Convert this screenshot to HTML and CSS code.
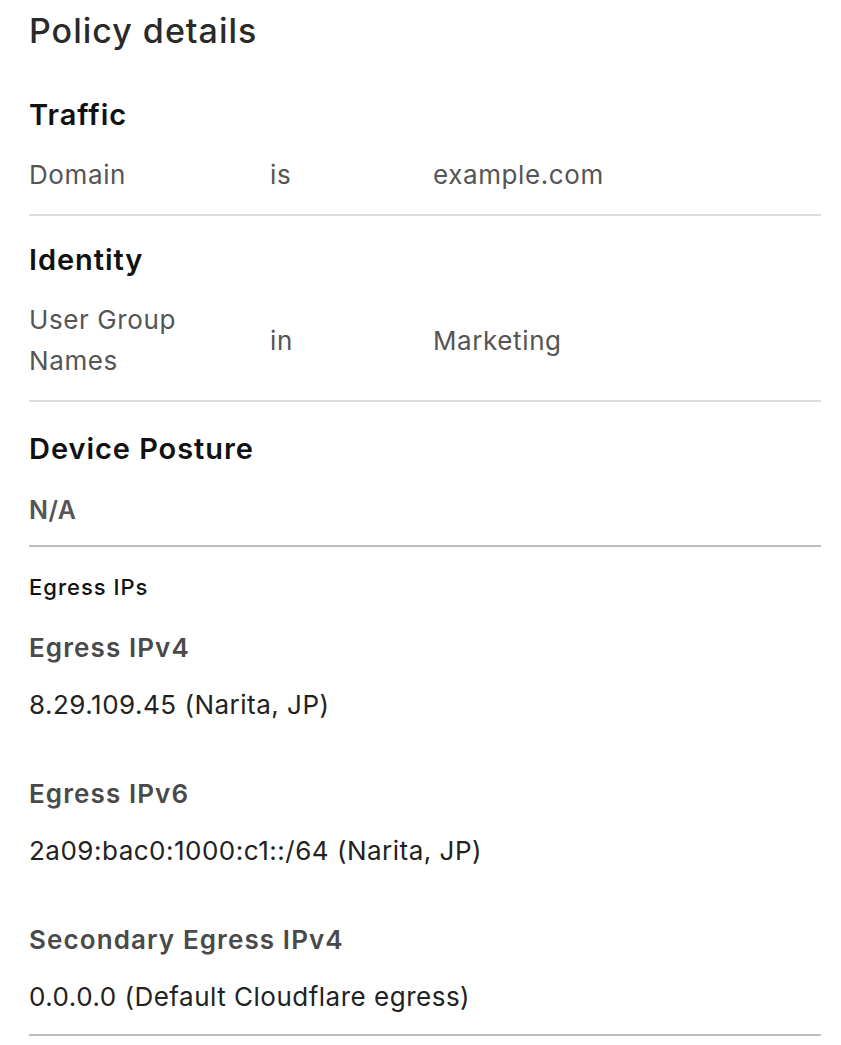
FILE: index.html
```html
<!DOCTYPE html>
<html>
<head>
<meta charset="utf-8">
<link rel="stylesheet" href="styles.css">
</head>
<body>
<main class="page">
  <h1 class="title">Policy details</h1>

  <section class="section">
    <h2 class="heading">Traffic</h2>
    <div class="cond">
      <span class="cell">Domain</span>
      <span class="cell">is</span>
      <span class="cell">example.com</span>
    </div>
  </section>

  <section class="section">
    <h2 class="heading">Identity</h2>
    <div class="cond">
      <span class="cell">User Group<br>Names</span>
      <span class="cell">in</span>
      <span class="cell">Marketing</span>
    </div>
  </section>

  <section class="section section-dark">
    <h2 class="heading">Device Posture</h2>
    <div class="na">N/A</div>
  </section>

  <section class="egress">
    <h3 class="egress-title">Egress IPs</h3>
    <div class="field">
      <div class="field-label">Egress IPv4</div>
      <div class="field-value">8.29.109.45 (Narita, JP)</div>
    </div>
    <div class="field">
      <div class="field-label">Egress IPv6</div>
      <div class="field-value">2a09:bac0:1000:c1::/64 (Narita, JP)</div>
    </div>
    <div class="field">
      <div class="field-label">Secondary Egress IPv4</div>
      <div class="field-value">0.0.0.0 (Default Cloudflare egress)</div>
    </div>
  </section>
</main>
</body>
</html>
```

FILE: styles.css
```css
html, body {
  margin: 0;
  padding: 0;
  background: #ffffff;
}
body {
  font-family: Inter, "Noto Sans", "Liberation Sans", sans-serif;
  color: #222;
}
.page {
  width: 792px;
  padding: 11px 0 0 29px;
}
.title {
  margin: 0;
  font-size: 34px;
  line-height: 40px;
  font-weight: 500;
  color: #2a2a2a;
  letter-spacing: 1px;
}
.section {
  border-bottom: 2px solid #dcdcdc;
}
.section-dark {
  border-bottom-color: #bdbdbd;
}
.title + .section {
  margin-top: 44px;
}
.section + .section {
  margin-top: 24px;
}
.section + .section-dark {
  margin-top: 27px;
}
.heading {
  margin: 0;
  font-size: 29px;
  line-height: 40px;
  font-weight: 600;
  color: #111;
  letter-spacing: 0.95px;
}
.cond {
  display: grid;
  grid-template-columns: 241px 163px 1fr;
  align-items: center;
  padding: 19px 0 19px;
  font-size: 26px;
  line-height: 41px;
  color: #555;
  letter-spacing: 0.6px;
}
.na {
  padding: 21px 0 15px;
  font-size: 25px;
  line-height: 40px;
  font-weight: 600;
  color: #555;
  letter-spacing: 0.5px;
}
.egress {
  margin-top: 25px;
  border-bottom: 2px solid #bdbdbd;
  padding-bottom: 19px;
}
.egress-title {
  margin: 0;
  font-size: 22px;
  line-height: 30px;
  font-weight: 500;
  color: #111;
  letter-spacing: 1px;
}
.field {
  display: flex;
  flex-direction: column;
  gap: 21px;
}
.field + .field {
  margin-top: 53px;
}
.egress-title + .field {
  margin-top: 28px;
}
.field-label {
  font-size: 26px;
  line-height: 36px;
  font-weight: 600;
  color: #4a4a4a;
  letter-spacing: 1.1px;
}
.field-value {
  font-size: 26px;
  line-height: 36px;
  color: #222;
  letter-spacing: 0.5px;
}
```
